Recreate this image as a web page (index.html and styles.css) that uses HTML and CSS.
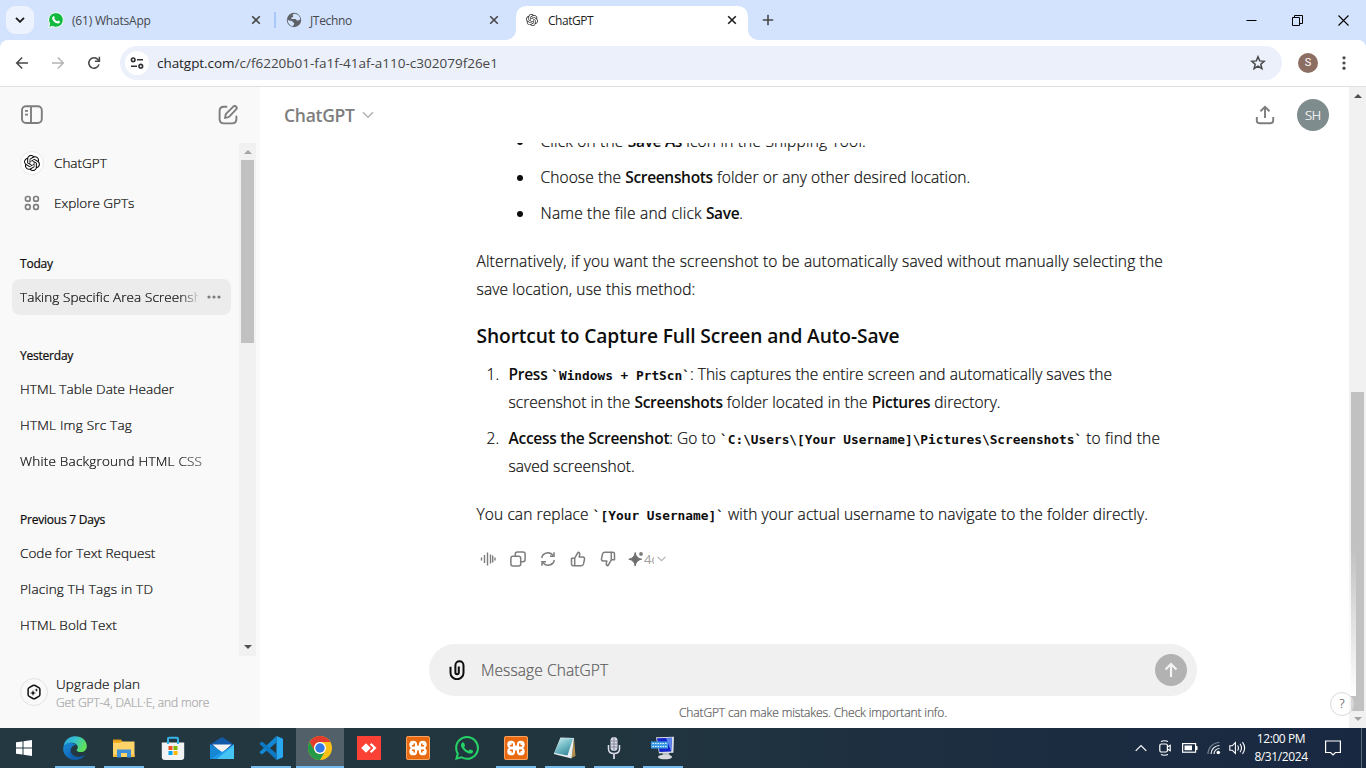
FILE: index.html
```html
<!DOCTYPE html>
<html lang="en">
<head>
<meta charset="utf-8">
<title>ChatGPT</title>
<link rel="stylesheet" href="styles.css">
</head>
<body>
<svg class="defs" width="0" height="0">
  <symbol id="knot" viewBox="0 0 24 24"><path fill="currentColor" d="M22.2819 9.8211a5.9847 5.9847 0 0 0-.5157-4.9108 6.0462 6.0462 0 0 0-6.5098-2.9A6.0651 6.0651 0 0 0 4.9807 4.1818a5.9847 5.9847 0 0 0-3.9977 2.9 6.0462 6.0462 0 0 0 .7427 7.0966 5.98 5.98 0 0 0 .511 4.9107 6.051 6.051 0 0 0 6.5146 2.9001A5.9847 5.9847 0 0 0 13.2599 24a6.0557 6.0557 0 0 0 5.7718-4.2058 5.9894 5.9894 0 0 0 3.9977-2.9001 6.0557 6.0557 0 0 0-.7475-7.0729zm-9.022 12.6081a4.4755 4.4755 0 0 1-2.8764-1.0408l.1419-.0804 4.7783-2.7582a.7948.7948 0 0 0 .3927-.6813v-6.7369l2.02 1.1686a.071.071 0 0 1 .038.052v5.5826a4.504 4.504 0 0 1-4.4945 4.4944zm-9.6607-4.1254a4.4708 4.4708 0 0 1-.5346-3.0137l.142.0852 4.783 2.7582a.7712.7712 0 0 0 .7806 0l5.8428-3.3685v2.3324a.0804.0804 0 0 1-.0332.0615L9.74 19.9502a4.4992 4.4992 0 0 1-6.1408-1.6464zM2.3408 7.8956a4.485 4.485 0 0 1 2.3655-1.9728V11.6a.7664.7664 0 0 0 .3879.6765l5.8144 3.3543-2.0201 1.1685a.0757.0757 0 0 1-.071 0l-4.8303-2.7865A4.504 4.504 0 0 1 2.3408 7.872zm16.5963 3.8558L13.1038 8.364 15.1192 7.2a.0757.0757 0 0 1 .071 0l4.8303 2.7913a4.4944 4.4944 0 0 1-.6765 8.1042v-5.6772a.79.79 0 0 0-.407-.667zm2.0107-3.0231l-.142-.0852-4.7735-2.7818a.7759.7759 0 0 0-.7854 0L9.409 9.2297V6.8974a.0662.0662 0 0 1 .0284-.0615l4.8303-2.7866a4.4992 4.4992 0 0 1 6.6802 4.66zM8.3065 12.863l-2.02-1.1638a.0804.0804 0 0 1-.038-.0567V6.0742a4.4992 4.4992 0 0 1 7.3757-3.4537l-.142.0805L8.704 5.459a.7948.7948 0 0 0-.3927.6813zm1.0976-2.3654l2.602-1.4998 2.6069 1.4998v2.9994l-2.5974 1.4997-2.6067-1.4997Z"/></symbol>
  <symbol id="whatsapp" viewBox="0 0 24 24"><path fill="currentColor" d="M17.472 14.382c-.297-.149-1.758-.867-2.03-.967-.273-.099-.471-.148-.67.15-.197.297-.767.966-.94 1.164-.173.199-.347.223-.644.075-.297-.15-1.255-.463-2.39-1.475-.883-.788-1.48-1.761-1.653-2.059-.173-.297-.018-.458.13-.606.134-.133.298-.347.446-.52.149-.174.198-.298.298-.497.099-.198.05-.371-.025-.52-.075-.149-.669-1.612-.916-2.207-.242-.579-.487-.5-.669-.51-.173-.008-.371-.01-.57-.01-.198 0-.52.074-.792.372-.272.297-1.04 1.016-1.04 2.479 0 1.462 1.065 2.875 1.213 3.074.149.198 2.096 3.2 5.077 4.487.709.306 1.262.489 1.694.625.712.227 1.36.195 1.871.118.571-.085 1.758-.719 2.006-1.413.248-.694.248-1.289.173-1.413-.074-.124-.272-.198-.57-.347m-5.421 7.403h-.004a9.87 9.87 0 01-5.031-1.378l-.361-.214-3.741.982.998-3.648-.235-.374a9.86 9.86 0 01-1.51-5.26c.001-5.45 4.436-9.884 9.888-9.884 2.64 0 5.122 1.03 6.988 2.898a9.825 9.825 0 012.893 6.994c-.003 5.45-4.437 9.884-9.885 9.884m8.413-18.297A11.815 11.815 0 0012.05 0C5.495 0 .16 5.335.157 11.892c0 2.096.547 4.142 1.588 5.945L.057 24l6.305-1.654a11.882 11.882 0 005.683 1.448h.005c6.554 0 11.89-5.335 11.893-11.893a11.821 11.821 0 00-3.48-8.413Z"/></symbol>
  <symbol id="close" viewBox="0 0 10 10"><path d="M1.2 1.2l7.6 7.6M8.800 1.200L1.200 8.800" stroke="currentColor" stroke-width="1.6" fill="none"/></symbol>
  <symbol id="xampp" viewBox="0 0 24 24">
    <rect width="24" height="24" rx="2" fill="#e8690f"/><rect x=".5" y=".5" width="23" height="23" rx="2" fill="none" stroke="#f6a565"/>
    <g fill="#fff"><circle cx="7.200" cy="8.600" r="3.900"/><circle cx="16.800" cy="8.600" r="3.900"/><circle cx="7.200" cy="15.400" r="3.900"/><circle cx="16.800" cy="15.400" r="3.900"/><rect x="7.500" y="9.500" width="9" height="5"/></g>
    <path d="M8.200 8v1.800H6.500M15.800 8v1.800h1.700M8.200 16v-1.800H6.500M15.800 16v-1.800h1.700" fill="none" stroke="#e8690f" stroke-width="1.500" stroke-linecap="round"/>
  </symbol>
</svg>

<div class="window">
  <header class="tabstrip">
    <button class="tab-search"><svg width="10" height="6" viewBox="0 0 10 6"><path d="M1 .8l4 4 4-4" fill="none" stroke="#1f1f1f" stroke-width="1.900"/></svg></button>
    <div class="tab tab-first">
      <svg class="favicon" width="16" height="16" viewBox="0 0 16 16"><path d="M8 .5a7.400 7.400 0 1 1-3.600 13.900L.6 15.500l1-3.700A7.400 7.400 0 0 1 8 .5z" fill="#12b93f" stroke="#fff" stroke-width="1"/><path d="M5.500 4.200c.5-.2.800.1 1.300 1.500.1.500-.6.800-.5 1.100.6 1.200 1.500 2 2.700 2.500.5.200.8-.9 1.200-.8.700.3 1.300.6 1.800.9.200 1.300-1 2-2 2-2.800-.2-5.600-2.700-5.900-5.200 0-.8.600-1.800 1.400-2z" fill="#fff"/></svg>
      <span class="tab-label t-wa">(61) WhatsApp</span>
      <svg class="x" width="10" height="10"><use href="#close"/></svg>
    </div>
    <div class="tab tab-second">
      <svg class="favicon" width="16" height="16" viewBox="0 0 16 16"><circle cx="8" cy="8" r="7.200" fill="#5f6368"/><path d="M8.500 1.800C6.500 2.200 6.400 3.300 7 4c.6.800-.3 1.400-1.200 1.400-.9.100-.8 1.500-.1 1.700h3.500c1 .2 1.100 1.300 2 1.400 1 .1 2.400-.4 3-1.200.2-2.300-1.600-5-5.700-5.500zM1.700 7.500c1 1.200 2.500 1.200 4 1.400 1.200.1 1 1.600 2 1.900.9.300.5 1.800-.1 2.400-.5.500-.7 1-1.300 1C3.500 13.300 1.500 11 1.700 7.500z" fill="#d3e3fd"/></svg>
      <span class="tab-label t-jt">JTechno</span>
      <svg class="x" width="10" height="10"><use href="#close"/></svg>
    </div>
    <div class="tab tab-active">
      <svg class="favicon" width="12" height="12" color="#333"><use href="#knot"/></svg>
      <span class="tab-label t-cg">ChatGPT</span>
      <svg class="x" width="10" height="10"><use href="#close"/></svg>
    </div>
    <svg class="newtab" width="12" height="12" viewBox="0 0 12 12"><path d="M6 .8v10.400M.8 6h10.400" stroke="#474747" stroke-width="1.600"/></svg>
    <div class="winctl">
      <svg width="11" height="11" viewBox="0 0 11 11"><path d="M.5 5.500h10" stroke="#000"/></svg>
      <svg width="11" height="11" viewBox="0 0 11 11"><path d="M.5 2.500h7v8h-7zM2.500 2.500v-2h8v8h-3" fill="none" stroke="#000"/></svg>
      <svg width="11" height="11" viewBox="0 0 11 11"><path d="M.5.5l10 10M10.500.5l-10 10" stroke="#000" stroke-width="1.100"/></svg>
    </div>
  </header>

  <div class="toolbar-wrap">
    <div class="toolbar">
      <div class="nav">
        <svg width="14" height="14" viewBox="0 0 14 14"><path d="M13 7H2M7.200 1.500L1.700 7l5.500 5.500" fill="none" stroke="#474747" stroke-width="1.500"/></svg>
        <svg width="14" height="14" viewBox="0 0 14 14"><path d="M1 7h11M6.800 1.500L12.300 7l-5.500 5.500" fill="none" stroke="#b4b4b4" stroke-width="1.500"/></svg>
        <svg width="14" height="14" viewBox="0 0 14 14"><path d="M12 8.400A5.200 5.200 0 1 1 11 3.600L12.300 5" fill="none" stroke="#474747" stroke-width="1.500"/><path d="M12.400.8v4.500H7.900" fill="none" stroke="#474747" stroke-width="1.500"/></svg>
      </div>
      <div class="omnibox">
        <span class="site"><svg width="14" height="12" viewBox="0 0 14 12"><g fill="none" stroke="#303134" stroke-width="1.600"><circle cx="3.200" cy="2.800" r="1.800"/><path d="M7 2.800h6M1 9.200h6"/><circle cx="10.800" cy="9.200" r="1.800"/></g></svg></span>
        <span class="url"><span class="host">chatgpt.com</span>/c/f6220b01-fa1f-41af-a110-c302079f26e1</span>
        <svg class="star" width="16" height="16" viewBox="0 0 16 16"><path d="M8 1.800l1.700 4.100 4.500.4-3.400 2.900 1.100 4.400L8 11.200l-3.900 2.400 1.100-4.400L1.800 6.300l4.500-.4z" fill="none" stroke="#474747" stroke-width="1.500"/></svg>
      </div>
      <span class="profile">S</span>
      <svg class="kebab" width="4" height="14" viewBox="0 0 4 14"><g fill="#474747"><circle cx="2" cy="1.800" r="1.600"/><circle cx="2" cy="7" r="1.600"/><circle cx="2" cy="12.200" r="1.600"/></g></svg>
    </div>
  </div>

  <div class="page">
    <aside class="sidebar">
      <div class="side-head">
        <svg width="22" height="20" viewBox="0 0 22 20"><g fill="none" stroke="#7d7d7d" stroke-width="1.900"><rect x="1" y="1.200" width="19.800" height="16.800" rx="4"/><path d="M10 1.200V18"/></g><path d="M4 5.800h3M4 9.600h3" stroke="#7d7d7d" stroke-width="1.700"/></svg>
        <svg width="20" height="20" viewBox="0 0 20 20"><g fill="none" stroke="#7d7d7d" stroke-width="1.900" stroke-linecap="round"><path d="M8.500 1.800H6Q1.600 1.800 1.600 6v8q0 4.400 4.400 4.400h8q4.400 0 4.400-4.400v-2.500"/><path d="M15.300 1.600a1.900 1.900 0 0 1 2.800 2.800l-6.600 6.900q-.8.800-2 1.100l-2.400.4.400-2.500q.2-1.100 1-1.900z"/></g></svg>
      </div>
      <div class="side-scroll">
        <div class="side-list">
          <div class="link"><span class="badge"><svg width="16" height="16"><use href="#knot"/></svg></span><span>ChatGPT</span></div>
          <div class="link"><span class="grid4"><svg width="16" height="16" viewBox="0 0 16 16"><g fill="none" stroke="#7d7d7d" stroke-width="1.700"><rect x="1.500" y="1.500" width="4.600" height="4.600" rx="1.700"/><rect x="9.700" y="1.500" width="4.600" height="4.600" rx="1.700"/><rect x="1.500" y="9.700" width="4.600" height="4.600" rx="1.700"/><rect x="9.700" y="9.700" width="4.600" height="4.600" rx="1.700"/></g></svg></span><span>Explore GPTs</span></div>
          <h3>Today</h3>
          <div class="chat current"><span class="clip">Taking Specific Area Screenshot</span><svg width="14" height="4" viewBox="0 0 14 4"><g fill="#7d7d7d"><circle cx="2" cy="2" r="1.600"/><circle cx="7" cy="2" r="1.600"/><circle cx="12" cy="2" r="1.600"/></g></svg></div>
          <h3>Yesterday</h3>
          <div class="chat"><span>HTML Table Date Header</span></div>
          <div class="chat"><span class="loose">HTML Img Src Tag</span></div>
          <div class="chat"><span class="fade loose">White Background HTML CSS</span></div>
          <h3>Previous 7 Days</h3>
          <div class="chat"><span class="snug">Code for Text Request</span></div>
          <div class="chat"><span class="loose">Placing TH Tags in TD</span></div>
          <div class="chat"><span>HTML Bold Text</span></div>
        </div>
        <div class="bar side-bar">
          <i class="up dim"></i><div class="thumb"></div><i class="down"></i>
        </div>
      </div>
      <div class="upgrade">
        <span class="up-badge"><svg width="16" height="16" viewBox="0 0 16 16"><path d="M6.900 1.500q1.100-.6 2.200 0l3.700 2.100q1.100.7 1.100 1.900v5q0 1.200-1.100 1.900l-3.700 2.100q-1.100.6-2.200 0l-3.700-2.100q-1.100-.7-1.100-1.900v-5q0-1.200 1.100-1.900z" fill="none" stroke="#111" stroke-width="1.500"/><path d="M7 6l.8 2.200L10 9l-2.200.8L7 12l-.8-2.200L4 9l2.200-.8zM10.400 4.300l.5 1.300 1.300.5-1.300.5-.5 1.300-.5-1.300-1.300-.5 1.300-.5z" fill="#111"/></svg></span>
        <div class="up-text"><span class="up-title">Upgrade plan</span><span class="up-sub">Get GPT-4, DALL·E, and more</span></div>
      </div>
    </aside>

    <main class="main">
      <div class="main-head">
        <span class="model">ChatGPT</span>
        <svg class="chev" width="12" height="8" viewBox="0 0 12 8"><path d="M1 1.200l5 5 5-5" fill="none" stroke="#b4b4b4" stroke-width="1.600"/></svg>
        <svg class="share" width="20" height="20" viewBox="0 0 20 20"><g fill="none" stroke="#7d7d7d" stroke-width="1.900"><path d="M10 13V2M5.500 6.200L10 1.800l4.500 4.400"/><path d="M1.800 12v3.600q0 2.600 2.600 2.600h11.200q2.600 0 2.600-2.600V12"/></g></svg>
        <span class="avatar">SH</span>
      </div>
      <div class="thread">
        <ul class="bullets">
          <li>Click on the <b>Save As</b> icon in the Snipping Tool.</li>
          <li class="mid">Choose the <b>Screenshots</b> folder or any other desired location.</li>
          <li>Name the file and click <b>Save</b>.</li>
        </ul>
        <p class="alt">Alternatively, if you want the screenshot to be automatically saved without manually selecting the<br>save location, use this method:</p>
        <h2>Shortcut to Capture Full Screen and Auto-Save</h2>
        <ol class="steps">
          <li><b>Press <code>`Windows + PrtScn`</code></b>: This captures the entire screen and automatically saves the<br>screenshot in the <b>Screenshots</b> folder located in the <b>Pictures</b> directory.</li>
          <li><b>Access the Screenshot</b>: Go to <code>`C:\Users\[Your Username]\Pictures\Screenshots`</code> <span class="end">to find the</span><br>saved screenshot.</li>
        </ol>
        <p class="last">You can replace <code>`[Your Username]`</code> with your actual username to navigate to the folder directly.</p>
        <div class="actions">
          <svg width="16" height="16" viewBox="0 0 16 16"><path d="M1.500 6.500v3M4.500 4v8M7.500 1.500v13M10.500 3.500v9M12.700 4.500v7M15 6.500v3" stroke="#7d7d7d" stroke-width="1.400"/></svg>
          <svg width="16" height="16" viewBox="0 0 16 16"><g fill="none" stroke="#7d7d7d" stroke-width="1.500"><rect x=".9" y="5.300" width="9.800" height="9.800" rx="2"/><path d="M5.300 5V3q0-2.100 2.100-2.100h5.600q2.100 0 2.100 2.100v5.600q0 2.100-2.100 2.100h-2"/></g></svg>
          <svg width="16" height="16" viewBox="0 0 16 16"><g fill="none" stroke="#7d7d7d" stroke-width="1.500"><path d="M1.700 7A6.200 6.200 0 0 1 13 4.700M14.300 9A6.200 6.200 0 0 1 3 11.300"/><path d="M14 1.200v4h-4M2 14.800v-4h4"/></g></svg>
          <svg width="16" height="16" viewBox="0 0 16 16"><g fill="none" stroke="#7d7d7d" stroke-width="1.500" stroke-linejoin="round"><path d="M1.500 7.200h3.200v7.500H3.200q-1.700 0-1.700-1.700zM4.700 7.200L8 1.300q2 .3 1.700 2.400L9.200 6h3.500q2.200.2 1.800 2.300l-1 4.600q-.5 1.800-2.300 1.800H4.700"/></g></svg>
          <svg width="16" height="16" viewBox="0 0 16 16"><g fill="none" stroke="#7d7d7d" stroke-width="1.500" stroke-linejoin="round"><path d="M14.500 8.800h-3.200V1.300h1.500q1.700 0 1.700 1.700zM11.300 8.800L8 14.700q-2-.3-1.700-2.400L6.800 10H3.300q-2.200-.2-1.800-2.300l1-4.600Q3 1.300 4.800 1.300h6.500"/></g></svg>
          <div class="model-pick">
            <svg width="16" height="16" viewBox="0 0 16 16"><path d="M7.200 1.500Q8 7.300 13.600 8.200 8 9.100 7.200 15 6.400 9.100.8 8.200 6.400 7.300 7.200 1.500z" fill="#6f6f6f" stroke="#6f6f6f" stroke-linejoin="round"/><circle cx="13" cy="3" r="1.900" fill="#7d7d7d"/></svg>
            <span class="m4">4o</span>
            <svg width="9" height="6" viewBox="0 0 9 6"><path d="M.6.8l3.900 3.900L8.400.8" fill="none" stroke="#b4b4b4" stroke-width="1.200"/></svg>
          </div>
        </div>
      </div>
      <div class="composer">
        <svg class="clipicon" width="16" height="20" viewBox="0 0 16 20"><path d="M1.500 6.500v6a6.500 6.500 0 0 0 13 0V5.200a4 4 0 0 0-8.100 0v7.200a1.700 1.700 0 0 0 3.400 0V6.200" fill="none" stroke="#0d0d0d" stroke-width="2" transform="translate(0 .2)"/></svg>
        <span class="ph">Message ChatGPT</span>
        <span class="send"><svg width="14" height="16" viewBox="0 0 14 16"><path d="M7 15V2.200M1.500 7.500L7 2l5.500 5.500" fill="none" stroke="#f4f4f4" stroke-width="2.200"/></svg></span>
      </div>
      <p class="note"><span>ChatGPT can make mistakes. Check important info.</span></p>
    </main>
    <div class="bar main-bar">
      <i class="up"></i><div class="thumb"></div><i class="down dim"></i>
      <div class="veil"></div><span class="help">?</span>
    </div>
  </div>

  <footer class="taskbar">
    <span class="start"><svg width="16" height="16" viewBox="0 0 16 16"><path d="M0 2.300L6.500 1.400v6.100H0zM7.500 1.200L16 0v7.500H7.500zM0 8.500h6.500v6.100L0 13.700zM7.500 8.500H16V16l-8.500-1.200z" fill="#fff"/></svg></span>
    <div class="apps">
      <span class="app run"><svg width="24" height="24" viewBox="0 0 24 24"><defs><linearGradient id="e1" x1="0" y1="0" x2="1" y2=".4"><stop offset="0" stop-color="#2aa5dd"/><stop offset=".5" stop-color="#35c1d0"/><stop offset="1" stop-color="#5ee05a"/></linearGradient><linearGradient id="e2" x1="0" y1="0" x2="1" y2="1"><stop offset="0" stop-color="#1b8ddb"/><stop offset="1" stop-color="#0c4d9c"/></linearGradient></defs><path d="M.5 10.500C1.500 4.500 6 .3 12 .3 19.500.3 23.800 5 23.800 10.300c0 3.500-2.700 5.800-6 5.800-2.400 0-4.200-.8-4.200-1.900 0-.8 1.200-1.200 1.200-3 0-2.300-2.500-4.500-6.200-4.500C4.800 6.700 2 8.500.5 10.500z" fill="url(#e1)"/><path d="M.2 12C.8 8.500 4 6.700 7.300 6.700c3.200 0 5.200 1.500 6 2.600-2.700-.3-5.600 1.700-5.600 5.300 0 4 3.500 6.500 7.600 6.500 3 0 5-1 6.600-2-2 3-5.600 4.700-9.900 4.700C5.200 23.800-.4 18.500.2 12z" fill="url(#e2)"/><path d="M10 10.500c-3.500 2.500-2.800 7.700 1.500 9.800 4 1.700 8 .3 10.400-1.200-2.400 3.500-6 4.700-9.400 4.700-5-1-8.500-8.800-2.500-13.300z" fill="#0f5fae" opacity=".8"/></svg></span>
      <span class="app run"><svg width="24" height="24" viewBox="0 0 24 24"><path d="M1 3.500h8l1.500 2H1z" fill="#e19a14"/><path d="M1 5.500h21.500V21H1z" fill="#ffd56a"/><path d="M1 5h9L8.500 7H1z" fill="#f2ad27"/><path d="M5 21.500v-8h14v8h-4v-4.500H9v4.500z" fill="#3f8fd8"/><path d="M1 18.500h4V21H1zM19 18.500h3.500V21H19z" fill="#f8bd3e"/></svg></span>
      <span class="app"><svg width="24" height="24" viewBox="0 0 24 24"><path d="M7 8V2.800q0-1 1-1h8q1 0 1 1V8" fill="none" stroke="#37b5e8" stroke-width="2"/><path d="M.8 6.500h22.400V21q0 3-3 3H3.800q-3 0-3-3z" fill="#f1f3f5"/><path d="M7 3v5M17 3v5" stroke="#37b5e8" stroke-width="2"/><path d="M7.500 10h4v4h-4z" fill="#f25022"/><path d="M12.500 10h4v4h-4z" fill="#7fba00"/><path d="M7.500 15h4v4h-4z" fill="#00a4ef"/><path d="M12.500 15h4v4h-4z" fill="#ffb900"/></svg></span>
      <span class="app"><svg width="24" height="24" viewBox="0 0 24 24"><path d="M0 8.500L12 1l12 7.500V12H0z" fill="#1259a8"/><path d="M2.500 8.500h19L12 17z" fill="#f4f4f4"/><path d="M0 8.500L12 16l12-7.500V23H0z" fill="#1e9bea"/><path d="M0 8.500L12 16 .8 23H0z" fill="#1687d5"/><path d="M24 8.500V23H7z" fill="#45c3f3"/></svg></span>
      <span class="app run"><svg width="24" height="24" viewBox="0 0 24 24"><path d="M17.500 0L24 2.800v18.400L17.500 24z" fill="#29a8f2"/><path d="M17.500 0v6.500L3 18.500.3 16.200z" fill="#1387d3"/><path d="M17.500 24v-6.500L3 5.500.3 7.800z" fill="#0e78c2"/></svg></span>
      <span class="app run active"><svg width="24" height="24" viewBox="0 0 24 24"><circle cx="12" cy="12" r="12" fill="#fbc116"/><path d="M1.600 6A12 12 0 0 1 22.400 6H12a6 6 0 0 0-5.200 9z" fill="#e33b2e"/><path d="M1.600 6A12 12 0 0 0 12 24l5.200-9A6 6 0 0 1 6.800 15z" fill="#249a48"/><circle cx="12" cy="12" r="6" fill="#fff"/><circle cx="12" cy="12" r="4.700" fill="#3478e8"/></svg></span>
      <span class="app"><svg width="24" height="24" viewBox="0 0 24 24"><path d="M0 0h24v24H0z" fill="#fb4136"/><path d="M9 7.200l4.800 4.800L9 16.800 4.200 12z" fill="#fff"/><path d="M12.800 8.500l1.700-1.500 5 5-5 5-1.700-1.500 3.500-3.500z" fill="#fff"/></svg></span>
      <span class="app"><svg width="24" height="24"><use href="#xampp"/></svg></span>
      <span class="app"><svg width="24" height="24" color="#25d366"><use href="#whatsapp"/></svg></span>
      <span class="app run"><svg width="24" height="24"><use href="#xampp"/></svg></span>
      <span class="app run"><svg width="24" height="24" viewBox="0 0 24 24"><defs><linearGradient id="np" x1="0" y1="0" x2=".6" y2="1"><stop offset="0" stop-color="#d6f3f5"/><stop offset=".5" stop-color="#79bfca"/><stop offset="1" stop-color="#3b8c9c"/></linearGradient></defs><path d="M21 2l1.500 18-4 2z" fill="#b38d4a"/><path d="M7.500 1.500L21 2l-2.500 20.500L.8 18z" fill="#e9eef0"/><path d="M7.500 2L20 2.500l-5.500 17L1.500 17z" fill="url(#np)"/></svg></span>
      <span class="app run"><svg width="24" height="24" viewBox="0 0 24 24"><rect x="8.500" y="1" width="7" height="14" rx="3.500" fill="#d9dbe8"/><path d="M8.500 5h7M8.500 8h7M8.500 11h7M12 1v14" stroke="#85879c"/><path d="M6.500 9v4q0 4.500 5.500 4.500t5.500-4.500V9" fill="none" stroke="#dfe1ec" stroke-width="1.500"/><path d="M12 17v6" stroke="#c4c6d4" stroke-width="2"/></svg></span>
      <span class="app run"><svg width="24" height="24" viewBox="0 0 24 24"><path d="M5 1.200L23 .8l-.6 16L8 17.500z" fill="#d9dde4"/><path d="M6 2.200l15 -.4-.8 13.700L8.500 16z" fill="#1527cc"/><path d="M15 2l6-.2-.8 13.500z" fill="#5c83ee"/><path d="M12 17h6l1 3H11z" fill="#b9bec7"/><ellipse cx="14" cy="21" rx="7" ry="2.300" fill="#d5d8dd"/><rect y="5.500" width="17" height="7" fill="#3e9be6"/><path d="M1.500 7.500h14M1.500 10.500h14" stroke="#e2f2ff" stroke-dasharray="1.500 1"/></svg></span>
    </div>
    <div class="tray">
      <svg width="12" height="8" viewBox="0 0 12 8"><path d="M.7 6.800L6 1.500l5.300 5.300" fill="none" stroke="#fff" stroke-width="1.200"/></svg>
      <svg width="12" height="16" viewBox="0 0 12 16"><g fill="none" stroke="#fff" stroke-width="1.200"><rect x=".8" y="4" width="7.600" height="8" rx="1.500"/><path d="M8.400 7l2.800-1.700v5.400L8.400 9M2 1.500q3.500-1.500 7 0M2 14.500q3.500 1.500 7 0"/></g></svg>
      <svg width="16" height="10" viewBox="0 0 16 10"><rect x=".6" y=".6" width="13" height="8.600" fill="none" stroke="#fff" stroke-width="1.200"/><path d="M2.500 2.500h7.500v4.800H2.500zM14 3h1.500v4H14z" fill="#fff"/></svg>
      <svg width="14" height="14" viewBox="0 0 14 14"><g fill="none" stroke-width="1.200"><path d="M1 13A11.500 11.500 0 0 1 12.500 1.500" stroke="#7c8798"/><path d="M4 13a8.500 8.500 0 0 1 8.500-8.500M7 13a5.500 5.500 0 0 1 5.500-5.500" stroke="#e7eaef"/></g><circle cx="11.300" cy="11.500" r="1.800" fill="#fff"/></svg>
      <svg width="17" height="14" viewBox="0 0 17 14"><path d="M.8 4.800h2.400L6.400 1.500v11L3.200 9.200H.8zM8.600 4.500q1.700 2.500 0 5M11 2.800q3 4.200 0 8.400M13.500 1.200q4.300 5.800 0 11.600" fill="none" stroke="#fff" stroke-width="1.100"/></svg>
      <div class="clock"><span>12:00 PM</span><span>8/31/2024</span></div>
      <svg class="notif" width="16" height="16" viewBox="0 0 16 16"><path d="M.6 1h14.800v11.500h-5L8 15l-2.400-2.500h-5z" fill="none" stroke="#fff" stroke-width="1.200"/></svg>
      <i class="peek"></i>
    </div>
  </footer>
</div>
</body>
</html>
```
FILE: styles.css
```css
* { box-sizing: border-box; }
body { margin: 0; font-family: "Open Sans", "Noto Sans", sans-serif; font-weight: 300; color: #0d0d0d; overflow: hidden; }
svg { display: block; flex: none; }
.defs { position: absolute; }
h2, h3, p, ul, ol { margin: 0; padding: 0; }
button { border: 0; padding: 0; font: inherit; }
.window { width: 1366px; height: 768px; display: flex; flex-direction: column; background: #fff; }

/* Tab strip */
.tabstrip { height: 40px; flex: none; display: flex; align-items: flex-start; background: #d3e3fd; padding-left: 6px; }
.tab-search { width: 28px; height: 28px; margin-top: 6px; border-radius: 9px; background: #ecf2fe; display: grid; place-items: center; }
.tab { height: 40px; display: flex; align-items: center; font-size: 12px; font-weight: 400; color: #45484d; letter-spacing: -.2px; }
.tab-label { flex: 1; white-space: nowrap; }
.t-jt { letter-spacing: -.35px; }
.t-cg { letter-spacing: -.45px; }
.tab .x { color: #474747; }
.tab-first { width: 241px; padding: 0 14px 0 14px; }
.tab-first .tab-label { margin-left: 8px; }
.tab-second { width: 236px; padding: 0 17px 0 11px; }
.tab-second .tab-label { margin-left: 8px; }
.tab-second::before { content: ""; width: 2px; height: 16px; background: #a8c7fa; margin: 0 10px 0 -12px; }
.tab-second .x { margin-right: -5px; }
.tab-active { width: 232px; height: 34px; margin: 6px 0 0 5px; background: #fff; border-radius: 10px 10px 0 0; padding: 0 11px 6px 10px; color: #1f1f1f; position: relative; }
.tab-active .tab-label { margin-left: 10px; }
.tab-active .x { color: #1f1f1f; }
.tab-active::before, .tab-active::after { content: ""; position: absolute; bottom: 0; width: 10px; height: 10px; }
.tab-active::before { left: -10px; background: radial-gradient(circle at 0 0, transparent 9.5px, #fff 10px); }
.tab-active::after { right: -10px; background: radial-gradient(circle at 100% 0, transparent 9.5px, #fff 10px); }
.newtab { margin: 14px 0 0 14px; }
.winctl { margin: 15px 17px 0 auto; display: flex; gap: 35px; }

/* Toolbar */
.toolbar-wrap { background: #d3e3fd; height: 47px; flex: none; }
.toolbar { height: 47px; background: #fff; border-bottom: 1px solid #dfe1e5; border-radius: 8px 8px 0 0; display: flex; align-items: center; padding-left: 15px; }
.nav { display: flex; gap: 22px; width: 105px; }
.omnibox { width: 1162px; height: 34px; border-radius: 17px; background: #ebf0fa; display: flex; align-items: center; padding: 0 16px 0 5px; }
.site { width: 24px; height: 24px; border-radius: 50%; background: #fff; display: grid; place-items: center; }
.url { margin-left: 8px; font-size: 13.5px; font-weight: 400; color: #474747; flex: 1; letter-spacing: 0; }
.host { color: #1f1f1f; letter-spacing: -.05px; }
.profile { width: 20px; height: 20px; border-radius: 50%; background: #8d6e63; color: #fff; font: 11px/20px Roboto, sans-serif; text-align: center; margin-left: 16px; }
.kebab { margin-left: 24px; }

/* Page */
.page { height: 641px; flex: none; display: flex; -webkit-text-stroke: .22px currentColor; }
.sidebar { width: 260px; background: #f9f9f9; display: flex; flex-direction: column; }
.side-head { height: 56px; display: flex; justify-content: space-between; align-items: center; padding: 0 22px 0 21px; }
.side-scroll { height: 513px; display: flex; overflow: hidden; }
.side-list { width: 239px; padding-left: 12px; font-size: 13.5px; }
.side-list span { white-space: nowrap; }
.link { height: 40px; display: flex; align-items: center; padding-left: 8px; gap: 10px; }
.badge { width: 24px; height: 24px; border-radius: 50%; background: #fff; border: 1px solid #e8e8e8; display: grid; place-items: center; }
.grid4 { width: 24px; display: grid; place-items: center; }
.side-list h3 { height: 36px; padding: 11px 8px 0; line-height: 20px; font-size: 12px; font-weight: 400; letter-spacing: -.22px; margin-top: 20px; }
.chat { width: 219px; height: 36px; border-radius: 8px; padding: 0 8px; display: flex; align-items: center; letter-spacing: .09px; }
.loose { letter-spacing: .22px; }
.snug { letter-spacing: .02px; }
.current { background: #ececec; gap: 9px; }
.clip { width: 178px; overflow: hidden; -webkit-mask-image: linear-gradient(to right, #000 160px, transparent 180px); }
.fade { -webkit-mask-image: linear-gradient(to right, #000 150px, rgba(0,0,0,.6) 185px); }
.bar { width: 17px; background: #f1f1f1; display: flex; flex-direction: column; align-items: center; }
.bar i { width: 0; height: 0; border: 4px solid transparent; }
.bar .up { border-top: 0; border-bottom-color: #505050; }
.bar .down { border-bottom: 0; border-top-color: #505050; }
.bar .up.dim { border-bottom-color: #a3a3a3; }
.bar .down.dim { border-top-color: #a3a3a3; }
.bar .thumb { width: 13px; background: #c1c1c1; }
.side-bar .up { margin-top: 7px; }
.side-bar .thumb { height: 183px; margin-top: 6px; }
.side-bar .down { margin: auto 0 7px; }
.upgrade { flex: 1; display: flex; align-items: center; padding-left: 20px; gap: 8px; }
.up-badge { width: 28px; height: 28px; border: 1px solid #e3e3e3; border-radius: 50%; display: grid; place-items: center; }
.up-text { display: flex; flex-direction: column; margin-top: 2px; }
.up-title { font-size: 13.5px; line-height: 19px; letter-spacing: .15px; }
.up-sub { font-size: 12px; line-height: 17px; color: #a8a8a8; letter-spacing: -.12px; }

.main { width: 1089px; display: flex; flex-direction: column; }
.main-head { height: 56px; flex: none; display: flex; align-items: center; padding: 0 20px 0 24px; }
.model { font-size: 17.5px; font-weight: 600; color: #7d7d7d; letter-spacing: -.28px; -webkit-text-stroke: 0; }
.chev { margin-left: 7px; }
.share { margin-left: auto; }
.avatar { width: 32px; height: 32px; margin-left: 22px; border-radius: 50%; background: #7f8c8d; color: #fff; font: 300 13px/32px "Open Sans", sans-serif; letter-spacing: -.3px; text-align: center; }
.thread { height: 501px; flex: none; overflow: hidden; padding-left: 216.500px; font-size: 15.5px; line-height: 28px; letter-spacing: .155px; white-space: nowrap; }
.thread b { font-weight: 600; letter-spacing: -.32px; -webkit-text-stroke: 0; }
.thread code { font: 700 12.8px "DejaVu Sans Mono", monospace; letter-spacing: 0; line-height: 1; vertical-align: .5px; -webkit-text-stroke: 0; }
.thread ul, .thread ol { list-style: none; }
.bullets { margin-top: -16px; padding-left: 64px; letter-spacing: .2px; }
.bullets .mid { letter-spacing: .1px; }
.bullets li { margin-bottom: 8px; }
.bullets li::before { content: ""; display: inline-block; width: 6px; height: 6px; border-radius: 50%; background: #0d0d0d; margin: 0 18px 2px -24px; vertical-align: baseline; }
.alt { margin-top: 20px; }
.thread h2 { font-size: 19.200px; font-weight: 600; line-height: 32px; margin-top: 17px; letter-spacing: -.1px; -webkit-text-stroke: 0; }
.steps { margin-top: 8px; padding-left: 32px; counter-reset: step; letter-spacing: .05px; }
.steps li { margin-bottom: 8px; counter-increment: step; }
.steps li::before { content: counter(step) "."; display: inline-block; width: 22px; margin-left: -22px; }
.steps .end { letter-spacing: .2px; }
.steps b { letter-spacing: -.26px; }
.last { margin-top: 20px; letter-spacing: .11px; }
.actions { display: flex; gap: 14px; align-items: center; margin: 23px 0 0 3.500px; }
.model-pick { display: flex; align-items: center; margin-left: -2px; }
.m4 { font-size: 13px; line-height: 16px; width: 10px; overflow: hidden; color: #909090; }
.model-pick svg:last-child { margin-left: 3px; }
.composer { width: 768px; height: 52px; flex: none; margin-left: 169px; background: #f0f0f0; border-radius: 26px; display: flex; align-items: center; padding: 0 10px 0 20px; }
.ph { flex: 1; margin-left: 16px; font-size: 15.5px; color: #5d5d5d; letter-spacing: .1px; }
.send { width: 32px; height: 32px; border-radius: 50%; background: #b2b2b2; display: grid; place-items: center; }
.note { height: 32px; margin-left: 169px; width: 768px; text-align: center; font-size: 12px; line-height: 33px; color: #5d5d5d; letter-spacing: -.12px; }

.main-bar { position: relative; }
.main-bar .up { margin-top: 7px; }
.main-bar .thumb { margin-top: 294px; height: 319px; }
.main-bar .down { margin-top: 6px; }
.veil { position: absolute; left: 0; top: 460px; width: 7px; height: 149px; background: linear-gradient(rgba(255,255,255,0), #fff); }
.help { position: absolute; left: -19px; top: 605px; width: 24px; height: 24px; border: 1px solid #d9d9d9; border-radius: 50%; font-size: 12px; line-height: 22px; text-align: center; color: #5d5d5d; background: rgba(255,255,255,.35); }

/* Taskbar */
.taskbar { height: 40px; flex: none; display: flex; background: linear-gradient(to right, #233840 0%, #21353f 45%, #1c2d41 75%, #192841 100%); }
.start { width: 51px; display: flex; align-items: center; padding-left: 16px; }
.apps { display: flex; gap: 1px; }
.app { width: 48px; display: grid; place-items: center; }
.run { background: linear-gradient(#76b9ed, #76b9ed) center bottom / 40px 2px no-repeat; }
.active { background: linear-gradient(#76b9ed, #76b9ed) center bottom / 48px 2px no-repeat, #526169; }
.tray { margin-left: auto; display: flex; align-items: center; color: #fff; }
.tray > svg { margin-right: 12px; }
.tray > svg:nth-child(2) { margin-right: 11px; }
.tray > svg:nth-child(3) { margin-right: 9px; }
.tray > svg:nth-child(4) { margin-right: 8px; }
.tray > svg:nth-child(5) { margin-right: 7px; }
.clock { width: 56px; display: flex; flex-direction: column; align-items: center; font-size: 12px; font-weight: 400; line-height: 18px; letter-spacing: -.4px; white-space: nowrap; }
.tray > .notif { margin: 0 20px 0 16px; }
.peek { width: 5px; height: 40px; border-left: 1px solid #5d6879; }
```
